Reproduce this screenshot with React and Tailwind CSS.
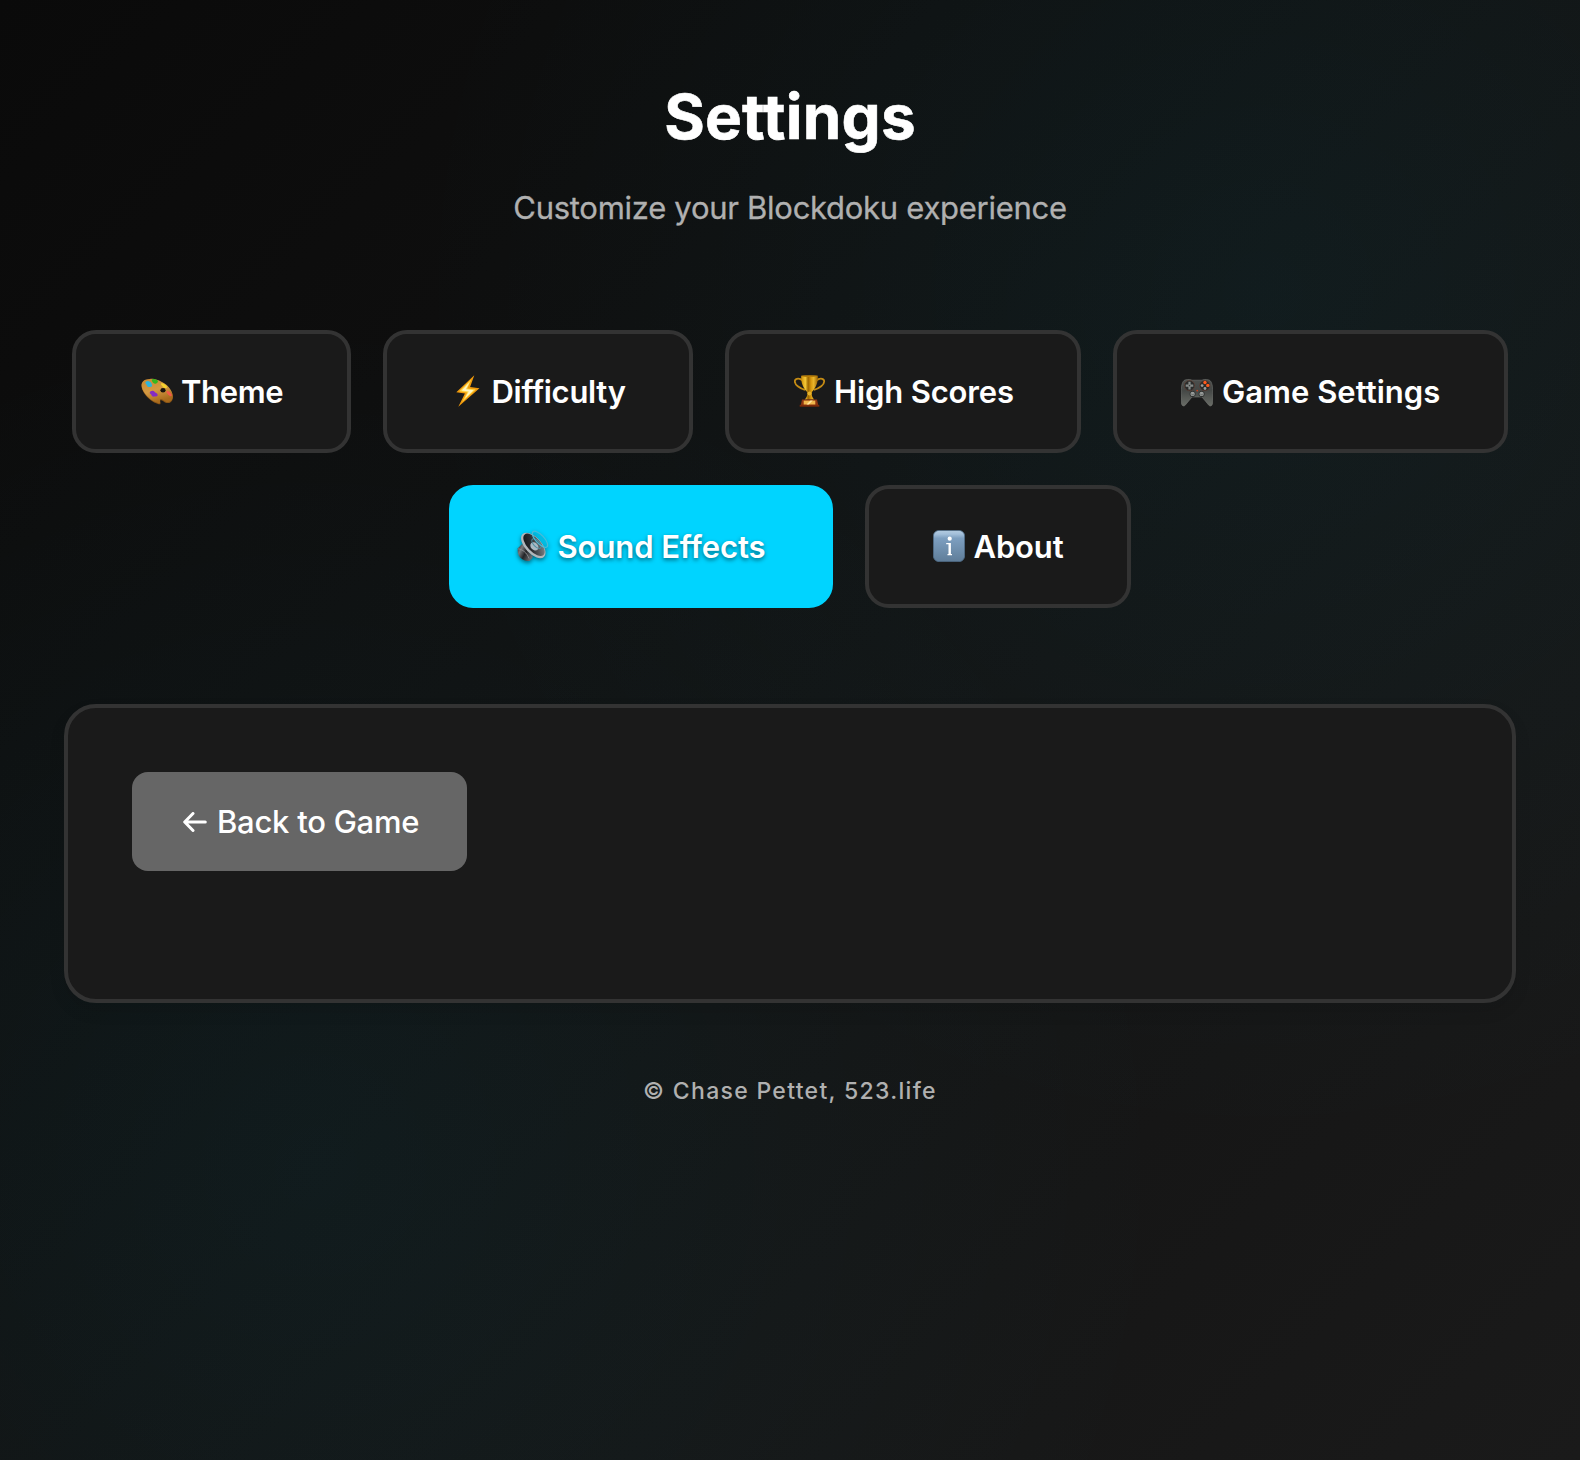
import React from "react";

function Palette() {
  return (
    <svg viewBox="0 0 32 32" className="size-8 shrink-0">
      <defs>
        <linearGradient id="wood" x1="0" y1="0" x2="0.4" y2="1">
          <stop offset="0" stopColor="#c98a32" />
          <stop offset="0.55" stopColor="#d49a42" />
          <stop offset="1" stopColor="#a86a1c" />
        </linearGradient>
      </defs>
      <path d="M9 4.4C13 3.6 20 6.2 25 10.2c4.500 3.600 7.400 9 6.800 13.200-.5 3.400-3.400 5.100-6.200 4.600-2.400-.4-3.600-2.500-5.200-2.800-1.800-.3-1.400 1.500-1 2.800.4 1.200-.8 1.600-2.300 1.100C12 27.600 6.500 23.500 3.300 18.600.2 13.900-.6 8.900 2.300 6.200 4 4.700 6.300 4.500 9 4.400Z" fill="#8a5516" />
      <path d="M9 3.900C13 3.200 20 5.600 25 9.600c4.500 3.600 7.300 8.800 6.700 12.900-.5 3.300-3.400 4.900-6.200 4.400-2.400-.4-3.600-2.500-5.200-2.800-1.800-.3-1.400 1.500-1 2.800.4 1.200-.8 1.500-2.300 1C12 26.600 6.600 22.700 3.400 17.800.3 13.100-.5 8.600 2.400 5.900 4 4.500 6.300 4 9 3.900Z" fill="url(#wood)" />
      <ellipse cx="22" cy="15.200" rx="2.600" ry="2.200" fill="#18120c" />
      <path d="M4.500 7c1-.9 2.300-1.500 3-.8.600.6 1.200.1 2 .9 1 1.100 2.200 3.900 1.300 4.500-.8.500-2.200.4-3 .5-1.500.1-1.700-1.600-2.200-2.300-.4-.6-1.700-2.200-1.100-2.800Z" fill="#2fb4dc" />
      <path d="M10.800 5c.5-1.200 2-1.300 3-.7 1 .2 2.900.6 3.100 1.900.3 1-.8 1.500-1.600 2.200-.9.800-2.300.4-2.800-.4-.7-.7-2-2-1.700-3Z" fill="#35b820" />
      <path d="M20 8.800c.8-.9 1.900-.5 3 .1 1.200.6 2.700 1.700 3 2.900.3.900-.7 1.300-1.700 1.200-1.200 0-2-.3-2.500-1.200-.4-.8-2.200-2.200-1.800-3Z" fill="#f5d22c" />
      <path d="M8.700 17.800c.2-1.300 1.900-2.300 3.200-2 1.200.3 1.700 1.300 2.800 2 1.200.6 2.600 1.900 1.800 3-.7 1-2.200.4-3.400.8-1.700.3-2.500-.8-2.700-1.800-.3-.8-1.900-1-1.700-2Z" fill="#842bc4" />
      <path d="M25.800 16.200c1-.7 2.200.2 3 1.100.9.900 2.300 2.400 1.900 3.400-.4.800-1.600.4-2.400-.1-1-.5-1.600-1.200-2-2-.3-.8-1.200-1.700-.5-2.400Z" fill="#f4584a" />
    </svg>
  );
}

function Bolt() {
  return (
    <svg viewBox="0 0 32 32" className="size-8 shrink-0">
      <path d="M22.300.3 4.300 17.300l8.600 1.200L6.300 31.700 27.500 13.300l-9.400-1.200Z" fill="#f09a0c" />
      <path d="M19.300 4.600 7.300 16.300l7.900 1.100-5.100 9.700L23.700 14.600l-8.400-1.100Z" fill="#ffd84a" />
      <path d="M17.300 7.600 9.700 15.500l7.100.9-3.800 6.800 8.500-8-7.600-.9Z" fill="#fff6c4" />
    </svg>
  );
}

function Trophy() {
  return (
    <svg viewBox="0 0 32 32" className="size-8 shrink-0">
      <defs>
        <linearGradient id="gold" x1="0" x2="1" y1="0" y2="0">
          <stop offset="0" stopColor="#c98a08" />
          <stop offset="0.25" stopColor="#f6c936" />
          <stop offset="0.42" stopColor="#9c6500" />
          <stop offset="0.6" stopColor="#d99a10" />
          <stop offset="0.75" stopColor="#e9b62c" />
          <stop offset="1" stopColor="#9a6204" />
        </linearGradient>
      </defs>
      <path d="M8.300 5.500C6.300 2.900 1.600 2.800.9 5.700.1 9.700 6 13.500 11 14.800M22.700 5.500c2-2.600 6.700-2.700 7.400.2.800 4-5.100 7.800-10.100 9.100" fill="none" stroke="#c48b14" strokeWidth="1.800" />
      <path d="M7.200.8h16.600c.5 7-2.200 12.400-5.900 16.300-.7 3.300.5 5.500 2.300 7.500h-9.400c1.800-2 3-4.200 2.300-7.500C9.400 13.200 6.700 7.800 7.200.8Z" fill="url(#gold)" />
      <ellipse cx="15.500" cy="1.100" rx="8.300" ry=".9" fill="#b67c08" />
      <circle cx="15.500" cy="18.400" r="2" fill="#e6b32c" />
      <path d="M8 24.400h15l1.300 6H6.700Z" fill="#8f3510" />
      <path d="M5.700 29.800h19.600v1.900H5.700Z" fill="#7c2a0a" />
      <path d="M9.700 25.600h11.600v3.900H9.700Z" fill="#efb54c" />
      <path d="m12.500 29.500 4-3.900h2.300l-4 3.900Z" fill="#ffe6a0" />
    </svg>
  );
}

function Gamepad() {
  return (
    <svg viewBox="0 0 32 32" className="size-8 shrink-0">
      <defs>
        <linearGradient id="pad" x1="0" y1="0" x2="0" y2="1">
          <stop offset="0" stopColor="#4c4f4d" />
          <stop offset="0.4" stopColor="#444745" />
          <stop offset="1" stopColor="#6a6d67" />
        </linearGradient>
      </defs>
      <path d="M4 5c3-1 6-.5 7 .2h10c1-.7 4-1.200 7-.2 2.600 1 3.400 5 3.700 9.500.3 5 .5 11-.3 14.500-.4 2-2.200 2.700-3.600 1.200L21 22H11l-6.800 8.200C2.800 31.700 1 31 .6 29c-.8-3.500-.6-9.500-.3-14.500C.6 10 1.400 6 4 5Z" fill="url(#pad)" stroke="#737672" strokeWidth=".6" />
      <circle cx="8.500" cy="10.600" r="5.200" fill="#2a2c2b" stroke="#674034" strokeWidth=".6" />
      <circle cx="23.800" cy="10.600" r="5.200" fill="#2a2c2b" stroke="#674034" strokeWidth=".6" />
      <path d="M7.400 6.800h2.200v2.700h2.700v2.200H9.600v2.700H7.400v-2.700H4.700V9.500h2.700Z" fill="#868b89" />
      <circle cx="8.500" cy="10.600" r=".8" fill="#3b3d3c" />
      <circle cx="24" cy="7.500" r="1.700" fill="#ff5a1c" />
      <circle cx="26.800" cy="10.400" r="1.700" fill="#ff5a1c" />
      <circle cx="21.100" cy="10.600" r="1.400" fill="#9a9e9c" />
      <circle cx="24" cy="13.500" r="1.400" fill="#9a9e9c" />
      <circle cx="16.200" cy="15.600" r=".9" fill="#c8401c" />
      <circle cx="11.600" cy="19" r="3" fill="#2c2e2d" />
      <circle cx="20.600" cy="19" r="3" fill="#2c2e2d" />
      <circle cx="11.600" cy="18.900" r="2.200" fill="#989c9a" />
      <circle cx="20.600" cy="18.900" r="2.200" fill="#989c9a" />
      <path d="M10.300 19c.8.900 1.800.9 2.600 0M19.300 19c.8.900 1.800.9 2.600 0" stroke="#555957" strokeWidth=".8" fill="none" />
    </svg>
  );
}

function Speaker() {
  return (
    <svg viewBox="0 0 32 32" className="size-8 shrink-0 overflow-visible drop-shadow-[0_2px_2px_rgba(0,0,0,0.5)]">
      <defs>
        <linearGradient id="magnet" x1="0" y1="0" x2="1" y2="0.6">
          <stop offset="0" stopColor="#202124" />
          <stop offset="0.3" stopColor="#77797c" />
          <stop offset="0.6" stopColor="#232427" />
          <stop offset="1" stopColor="#6b6d70" />
        </linearGradient>
        <linearGradient id="cone" x1="0" y1="0" x2="0.7" y2="1">
          <stop offset="0" stopColor="#0c0d0f" />
          <stop offset="0.45" stopColor="#2b2e32" />
          <stop offset="1" stopColor="#7a7f84" />
        </linearGradient>
      </defs>
      <path d="M5 14 1 18.200c-.8 3 0 6.600 2 9.100 2.300 2.700 6.500 4.300 9.500 3.600l3.500-4Z" fill="url(#magnet)" />
      <path d="M1 18.800c4.500.6 9 3.800 11 9.700" stroke="#8d8f92" strokeWidth=".9" fill="none" />
      <ellipse cx="16.300" cy="15.500" rx="8.200" ry="15.600" transform="rotate(-43 16.300 15.500)" fill="#b2b6ba" />
      <ellipse cx="17" cy="14.800" rx="6.700" ry="13.900" transform="rotate(-43 17 14.800)" fill="url(#cone)" />
      <ellipse cx="17.400" cy="16.400" rx="3.600" ry="4.600" transform="rotate(-43 17.400 16.400)" fill="#a9b8c2" />
      <ellipse cx="19.500" cy="13.600" rx="3" ry="6" transform="rotate(-43 19.500 13.600)" fill="none" stroke="#4b90a4" strokeWidth="1" />
      <ellipse cx="23" cy="9.300" rx="4.200" ry="10.300" transform="rotate(-43 23 9.300)" fill="none" stroke="#48bcd8" strokeWidth="1.200" />
    </svg>
  );
}

function Info() {
  return (
    <svg viewBox="0 0 32 32" className="size-8 shrink-0">
      <defs>
        <linearGradient id="tile" x1="0" y1="0" x2="0" y2="1">
          <stop offset="0" stopColor="#b3cbe0" />
          <stop offset="0.12" stopColor="#a3bfda" />
          <stop offset="0.25" stopColor="#7d9fc0" />
          <stop offset="1" stopColor="#5f7d99" />
        </linearGradient>
      </defs>
      <rect x=".4" y=".4" width="31.200" height="31.200" rx="5.600" fill="url(#tile)" stroke="#4f6d89" strokeWidth=".8" />
      <circle cx="16.700" cy="8.700" r="2.100" fill="#fff" />
      <path d="M13.200 13h4.700v11H19v1.300h-4.500V24h1v-9.700h-2.300Z" fill="#fff" />
    </svg>
  );
}

const rows = [
  [
    { label: "Theme", icon: Palette, box: "w-[279px] pl-[65px]", gap: "ml-[8px]", track: "tracking-[-0.35px]" },
    { label: "Difficulty", icon: Bolt, box: "w-[310px] pl-[65px]", gap: "ml-[7.5px]", track: "tracking-[-0.3px]" },
    { label: "High Scores", icon: Trophy, box: "w-[356px] pl-[65px]", gap: "ml-[8px]", track: "tracking-[-0.15px]" },
    { label: "Game Settings", icon: Gamepad, box: "w-[395px] pl-[64px]", gap: "ml-[9px]", track: "tracking-[0.02px]" },
  ],
  [
    { label: "Sound Effects", icon: Speaker, box: "w-[384px] pl-[64px]", gap: "ml-[8.5px]", track: "tracking-[-0.08px]", active: true },
    { label: "About", icon: Info, box: "w-[266px] pl-[64px]", gap: "ml-[8.5px]", track: "tracking-[-0.15px]" },
  ],
];

function Tab({ item }) {
  const Icon = item.icon;
  const tone = item.active
    ? "border-[#00d4ff] bg-[#00d4ff] [text-shadow:0_2px_4px_rgba(0,0,0,0.5)]"
    : "border-[#333333] bg-[#1a1a1a]";
  return (
    <button className={`flex h-[123px] shrink-0 items-center rounded-3xl border-4 pb-px text-[31px] font-semibold whitespace-nowrap text-white ${item.box} ${tone}`}>
      <Icon />
      <span className={`pt-0.5 ${item.gap} ${item.track}`}>{item.label}</span>
    </button>
  );
}

export default function App() {
  return (
    <div className="flex h-[1460px] w-[1580px] flex-col items-center overflow-hidden bg-[radial-gradient(circle_at_20%_80%,rgba(0,212,255,0.05)_0%,transparent_50%),radial-gradient(circle_at_80%_20%,rgba(0,212,255,0.05)_0%,transparent_50%),linear-gradient(135deg,#0a0a0a_0%,#1a1a1a_100%)] px-16 pt-20 font-['Inter',sans-serif] text-white">
      <h1 className="mt-[-2px] text-[62px] leading-[77px] font-bold tracking-[0.2px] [-webkit-text-stroke:0.6px_white]">Settings</h1>
      <p className="mt-[33px] text-[31px] leading-[40px] tracking-[-0.28px] text-[#b0b0b0] [-webkit-text-stroke:0.3px_#b0b0b0]">Customize your Blockdoku experience</p>
      <nav className="mt-[102px] flex flex-col gap-8">
        {rows.map((row, i) => (
          <div key={i} className="flex justify-center gap-8">
            {row.map((item) => (
              <Tab key={item.label} item={item} />
            ))}
          </div>
        ))}
      </nav>
      <section className="mt-24 h-[299px] w-full shrink-0 rounded-[32px] border-4 border-[#333333] bg-[#1a1a1a] p-16 shadow-[0_8px_16px_rgba(0,0,0,0.1)]">
        <button className="flex h-[99px] w-[335px] items-center rounded-2xl bg-[#666666] pl-[51px] text-[31px] font-medium whitespace-nowrap">
          <svg viewBox="0 0 24 20" className="h-5 w-6 shrink-0" fill="none" stroke="white" strokeWidth="3" strokeLinecap="round" strokeLinejoin="round">
            <path d="M10 1.500 1.700 10l8.300 8.500M2 10h20.300" />
          </svg>
          <span className="ml-[10px] pt-0.5 tracking-[-0.25px]">Back to Game</span>
        </button>
      </section>
      <footer className="mt-[73px] text-[23px] leading-[30px] font-medium tracking-[1.3px] text-[#b0b0b0]">© Chase Pettet, 523.life</footer>
    </div>
  );
}
